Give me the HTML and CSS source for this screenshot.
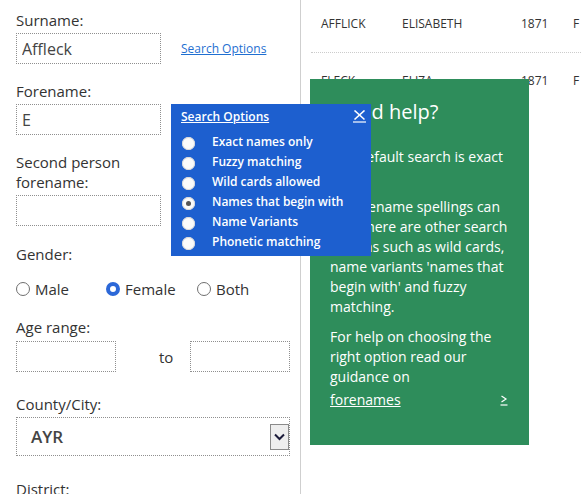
FILE: index.html
```html
<!DOCTYPE html>
<html lang="en">
<head>
<meta charset="utf-8">
<title>Search</title>
<link rel="stylesheet" href="styles.css">
</head>
<body>
<div class="page">
  <div class="col-left">
    <div class="field field-first">
      <label class="lbl">Surname:</label>
      <div class="inline-row">
        <input class="txt w-name" type="text" value="Affleck">
        <a class="opt-link" href="#">Search Options</a>
      </div>
    </div>
    <div class="field">
      <label class="lbl">Forename:</label>
      <input class="txt w-name" type="text" value="E">
    </div>
    <div class="field">
      <label class="lbl">Second person<br>forename:</label>
      <input class="txt w-name" type="text" value="">
    </div>
    <div class="field field-gender">
      <label class="lbl">Gender:</label>
      <div class="radios">
        <span class="radio-opt"><span class="rad"></span>Male</span>
        <span class="radio-opt"><span class="rad rad-on"></span>Female</span>
        <span class="radio-opt"><span class="rad"></span>Both</span>
      </div>
    </div>
    <div class="field field-age">
      <label class="lbl lbl-age">Age range:</label>
      <div class="age-row">
        <input class="txt w-age" type="text" value="">
        <span class="to">to</span>
        <input class="txt w-age" type="text" value="">
      </div>
    </div>
    <div class="field field-county">
      <label class="lbl lbl-county">County/City:</label>
      <div class="select">
        <span class="sel-val">AYR</span>
        <span class="sel-btn">
          <svg width="11" height="8" viewBox="0 0 11 8"><polyline points="1,1.5 5.5,6 10,1.5" fill="none" stroke="#1b1b3a" stroke-width="2"/></svg>
        </span>
      </div>
    </div>
    <div class="field field-district">
      <label class="lbl">District:</label>
    </div>

    <div class="popup">
      <div class="popup-head">
        <a class="popup-title" href="#">Search Options</a>
        <svg class="popup-close" width="13" height="13" viewBox="0 0 13 13">
          <line x1="1.5" y1="0.5" x2="11.5" y2="9.5" stroke="#fff" stroke-width="1.6"/>
          <line x1="11.5" y1="0.5" x2="1.5" y2="9.5" stroke="#fff" stroke-width="1.6"/>
          <line x1="0" y1="12" x2="13" y2="12" stroke="#fff" stroke-width="1.2"/>
        </svg>
      </div>
      <ul class="popup-list">
        <li><span class="prad"></span>Exact names only</li>
        <li><span class="prad"></span>Fuzzy matching</li>
        <li><span class="prad"></span>Wild cards allowed</li>
        <li><span class="prad prad-on"></span>Names that begin with</li>
        <li><span class="prad"></span>Name Variants</li>
        <li><span class="prad"></span>Phonetic matching</li>
      </ul>
    </div>
  </div>

  <div class="col-right">
    <div class="results">
      <div class="res-row res-first">
        <span class="c1">AFFLICK</span><span class="c2">ELISABETH</span><span class="c3">1871</span><span class="c4">F</span>
      </div>
      <div class="res-row res-last">
        <span class="c1">FLECK</span><span class="c2">ELIZA</span><span class="c3">1871</span><span class="c4">F</span>
      </div>
    </div>

    <div class="help">
      <h2 class="help-title">Need help?</h2>
      <p class="help-p help-p1">The default search is exact<br>only.</p>
      <p class="help-p">As forename spellings can<br>vary there are other search<br>options such as wild cards,<br>name variants 'names that<br>begin with' and fuzzy<br>matching.</p>
      <p class="help-p help-p3">For help on choosing the<br>right option read our<br>guidance on</p>
      <div class="help-link-row">
        <a class="help-link" href="#">forenames</a>
        <svg class="help-arrow" width="8" height="11" viewBox="0 0 8 11">
          <polyline points="1.5,1 6,4 1.5,7" fill="none" stroke="#fff" stroke-width="1.2"/>
          <line x1="0.5" y1="10" x2="7.5" y2="10" stroke="#fff" stroke-width="1.2"/>
        </svg>
      </div>
    </div>
  </div>
</div>
</body>
</html>
```

FILE: styles.css
```css
html, body {
  margin: 0;
  padding: 0;
  background: #ffffff;
}

body {
  font-family: "Open Sans", "Noto Sans", sans-serif;
  color: #333333;
  overflow: hidden;
}

.page {
  display: flex;
  height: 494px;
  overflow: hidden;
}

/* ---------- left column ---------- */
.col-left {
  position: relative;
  width: 301px;
  box-sizing: border-box;
  padding: 10px 0 0 16px;
  border-right: 1px solid #cfcfcf;
  flex: none;
}

.field {
  margin-top: 17px;
}

.field-first {
  margin-top: 0;
}

.lbl {
  display: block;
  font-size: 15px;
  line-height: 20px;
  color: #333;
  margin-bottom: 3px;
}

.txt {
  display: block;
  box-sizing: border-box;
  height: 31px;
  margin: 0;
  border: 1px dotted #8f8f8f;
  padding: 0 5px;
  font-family: "Open Sans", "Noto Sans", sans-serif;
  font-size: 16px;
  color: #444;
  background: #fff;
  outline: none;
}

.w-name {
  width: 145px;
}

.w-age {
  width: 100px;
}

.inline-row {
  display: flex;
  align-items: center;
}

.opt-link {
  margin-left: 20px;
  font-size: 12px;
  line-height: 16px;
  color: #1f6fd1;
  text-decoration: underline;
}

.field-gender {
  margin-top: 18px;
}

.radios {
  display: flex;
  align-items: center;
  margin-top: 15px;
  font-size: 15px;
  line-height: 20px;
}

.radio-opt {
  display: flex;
  align-items: center;
  width: 91px;
}

.radio-opt:first-child {
  width: 90px;
}

.rad {
  width: 14px;
  height: 14px;
  box-sizing: border-box;
  border: 1px solid #6f6f6f;
  border-radius: 50%;
  background: #fff;
  margin-right: 5px;
  flex: none;
}

.rad-on {
  border: 4px solid #2c68d8;
}

.field-age {
  margin-top: 18px;
}

.lbl-age {
  margin-bottom: 4px;
}

.age-row {
  display: flex;
  align-items: center;
  width: 274px;
}

.to {
  font-size: 15px;
  line-height: 20px;
  padding-left: 43px;
  margin-right: auto;
}

.field-county {
  margin-top: 22px;
}

.lbl-county {
  margin-bottom: 3px;
}

.field-district {
  margin-top: 23px;
}

.select {
  display: flex;
  align-items: center;
  justify-content: space-between;
  box-sizing: border-box;
  width: 274px;
  height: 39px;
  border: 1px dotted #8f8f8f;
  padding-left: 14px;
}

.sel-val {
  font-size: 17px;
  font-weight: 600;
  color: #444;
  line-height: 20px;
}

.sel-btn {
  display: flex;
  align-items: center;
  justify-content: center;
  box-sizing: border-box;
  width: 19px;
  height: 26px;
  border: 1px solid #8a8a8a;
  background: #eeeeee;
}

/* ---------- popup ---------- */
.popup {
  position: absolute;
  left: 171px;
  top: 104px;
  z-index: 3;
  width: 200px;
  height: 152px;
  box-sizing: border-box;
  background: #1d5fcf;
  padding: 5px 5px 4px 10px;
  color: #fff;
}

.popup-head {
  display: flex;
  justify-content: space-between;
  align-items: flex-start;
}

.popup-title {
  font-size: 12px;
  line-height: 16px;
  font-weight: 600;
  color: #fff;
  text-decoration: underline;
}

.popup-close {
  margin-top: 1px;
  display: block;
}

.popup-list {
  list-style: none;
  margin: 7px 0 0;
  padding: 0;
}

.popup-list li {
  display: flex;
  align-items: center;
  font-size: 12px;
  line-height: 20px;
  font-weight: 600;
  color: #fff;
}

.prad {
  position: relative;
  width: 13px;
  height: 13px;
  border-radius: 50%;
  background: #fafafa;
  box-shadow: inset 0 0 0 1px #d8d8d8;
  margin: 2px 17px 0 1px;
  flex: none;
}

.prad-on::after {
  content: "";
  position: absolute;
  left: 4px;
  top: 4px;
  width: 5px;
  height: 5px;
  border-radius: 50%;
  background: #555;
}

/* ---------- right column ---------- */
.col-right {
  position: relative;
  flex: 1;
  padding-left: 10px;
}

.res-row {
  display: flex;
  font-size: 12px;
  line-height: 16px;
  color: #333;
  padding: 20px 0 20px 10px;
  border-bottom: 1px dotted #cccccc;
}

.res-first {
  padding-top: 16px;
}

.res-last {
  border-bottom: none;
}

.c1 { width: 81px; }
.c2 { width: 119px; }
.c3 { width: 52px; }

.help {
  position: absolute;
  left: 9px;
  top: 79px;
  z-index: 2;
  width: 219px;
  height: 366px;
  box-sizing: border-box;
  padding: 20px 16px 0 20px;
  background: #2e8d5b;
  color: #fff;
}

.help-title {
  margin: 0;
  font-size: 20px;
  line-height: 26px;
  font-weight: 400;
  padding-left: 4px;
}

.help-p {
  margin: 0 0 10px;
  font-size: 14px;
  line-height: 20px;
  white-space: nowrap;
}

.help-p1 {
  margin-top: 22px;
}

.help-p3 {
  margin-bottom: 3px;
}

.help-link-row {
  display: flex;
  justify-content: space-between;
  align-items: center;
  font-size: 14px;
  line-height: 20px;
  padding-right: 4px;
}

.help-link {
  color: #fff;
  text-decoration: underline;
}

.help-arrow {
  display: block;
  margin-right: 1px;
}
```
